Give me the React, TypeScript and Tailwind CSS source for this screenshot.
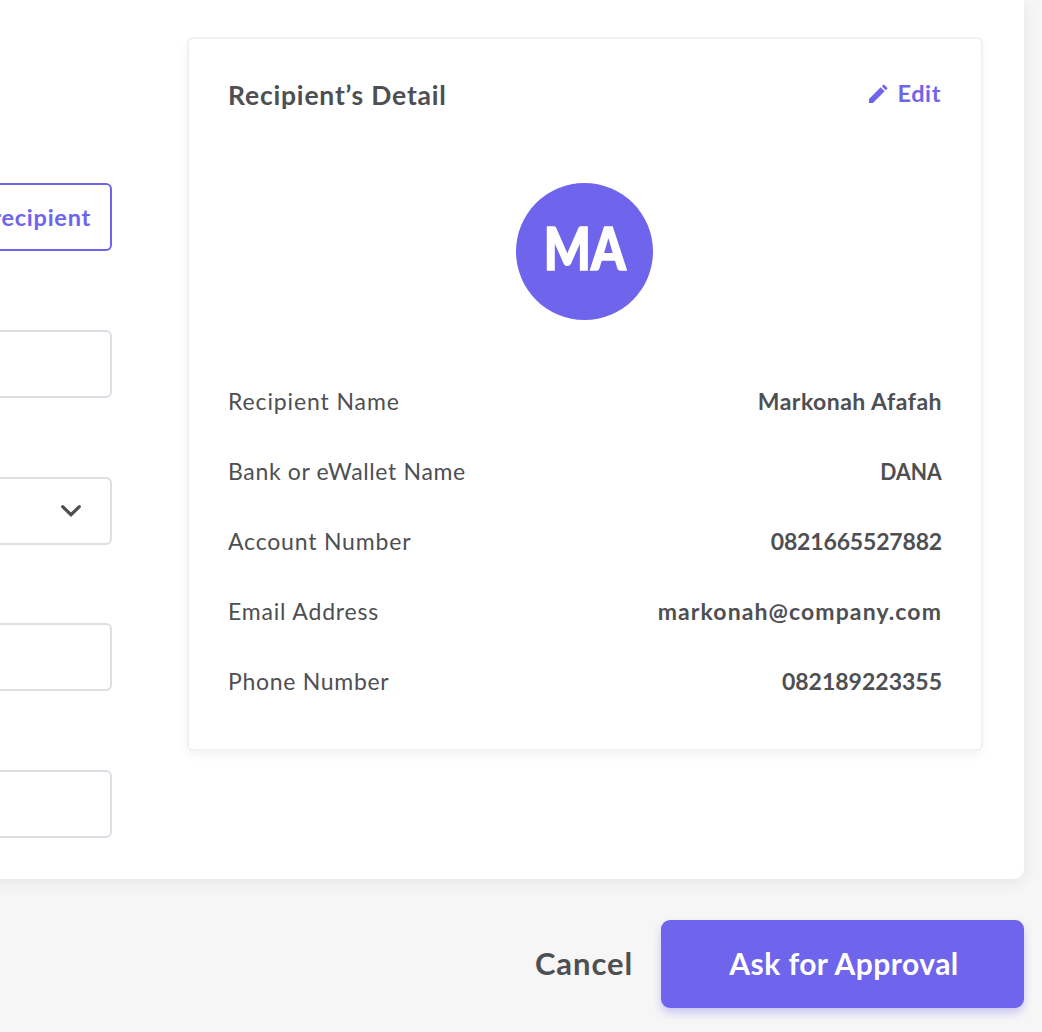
const details = [
  { label: "Recipient Name", value: "Markonah Afafah", l: "tracking-[0.88px]", v: "tracking-[0.48px]" },
  { label: "Bank or eWallet Name", value: "DANA", l: "tracking-[0.65px]", v: "origin-right scale-x-[0.92] tracking-normal" },
  { label: "Account Number", value: "0821665527882", l: "tracking-[0.81px]", v: "tracking-[-0.17px]" },
  { label: "Email Address", value: "markonah@company.com", l: "tracking-[0.82px]", v: "tracking-[1.1px]" },
  { label: "Phone Number", value: "082189223355", l: "tracking-[0.7px]", v: "tracking-normal" },
];

const field = "h-[68px] w-full shrink-0 rounded-r-md border-2 border-l-0 border-[#dcdfe4] bg-white";

function Form() {
  return (
    <div className="flex w-28 shrink-0 flex-col gap-[78.6px] pt-[183.4px]">
      <button className="flex h-[68px] w-full shrink-0 items-center justify-end rounded-r-md border-2 border-l-0 border-[#6f64ec] bg-white pr-[19px] text-[23.5px] font-bold tracking-[0.75px] whitespace-nowrap text-[#6f64ec]">
        recipient
      </button>
      <input aria-label="Recipient name" className={field} />
      <div className={field + " flex items-center justify-end pr-7"}>
        <svg className="mt-px" width="22" height="14" viewBox="0 0 22 14" fill="none" stroke="#4e4f53" strokeWidth="3.2" strokeLinecap="round" strokeLinejoin="miter">
          <path d="M2.7 2.7 11 10.7 19.3 2.7" />
        </svg>
      </div>
      <input aria-label="Email" className={field} />
      <input aria-label="Phone" className={field} />
    </div>
  );
}

function RecipientCard() {
  return (
    <section className="mt-[37px] ml-[75px] h-[714px] w-[796px] shrink-0 rounded-md border-2 border-[#f1f1f1] bg-white px-[39px] shadow-[0_5px_10px_rgba(0,0,0,0.045)]">
      <header className="flex h-[144px] items-start justify-between">
        <h2 className="pt-10 text-[26.5px] leading-8 font-bold tracking-[0.8px]">Recipient’s Detail</h2>
        <button className="mt-[38px] mr-px flex h-8 items-center text-[23.5px] leading-8 font-bold tracking-[0.6px] text-[#6f64ec]">
          <svg className="mr-[9px]" width="19" height="19" viewBox="3 3 18 18" fill="currentColor">
            <path d="M3 17.25V21h3.75L17.81 9.94l-3.75-3.75L3 17.25zM20.71 7.04 16.96 3.29l-1.84 1.83 3.75 3.75 1.84-1.83z" />
          </svg>
          Edit
        </button>
      </header>
      <div className="mx-auto flex w-[139px] pr-0.5">
        <div className="flex size-[137px] items-center justify-center rounded-full bg-[#6f64ec] text-[59px] leading-none font-black text-white">
          <span className="-mt-2 ml-0.5 scale-x-[0.84] [-webkit-text-stroke:1.6px_white]">MA</span>
        </div>
      </div>
      <dl className="mt-[46.5px]">
        {details.map((d) => (
          <div key={d.label} className="flex h-[69.9px] items-center justify-between text-[23px] leading-8">
            <dt className={d.l}>{d.label}</dt>
            <dd className={"font-bold " + d.v}>{d.value}</dd>
          </div>
        ))}
      </dl>
    </section>
  );
}

export default function App() {
  return (
    <main className="h-[1032px] w-[1042px] overflow-hidden bg-[#f6f6f6] font-['Lato',sans-serif] text-[#4e4f53]">
      <div className="-ml-8 flex h-[879px] w-[1056px] items-start rounded-br-[10px] bg-white pl-8 shadow-[0_4px_16px_rgba(0,0,0,0.07)]">
        <Form />
        <RecipientCard />
      </div>
      <footer className="flex w-[1024px] items-center justify-end pt-[41px]">
        <button className="mr-[28px] pb-0.5 text-[31px] font-bold tracking-[0.9px]">Cancel</button>
        <button className="h-[88px] w-[363px] rounded-[9px] bg-[#6f64ec] pb-0.5 pl-[3px] text-[30px] font-bold tracking-[0.45px] text-white shadow-[0_5px_8px_rgba(111,100,236,0.32)]">
          Ask for Approval
        </button>
      </footer>
    </main>
  );
}
